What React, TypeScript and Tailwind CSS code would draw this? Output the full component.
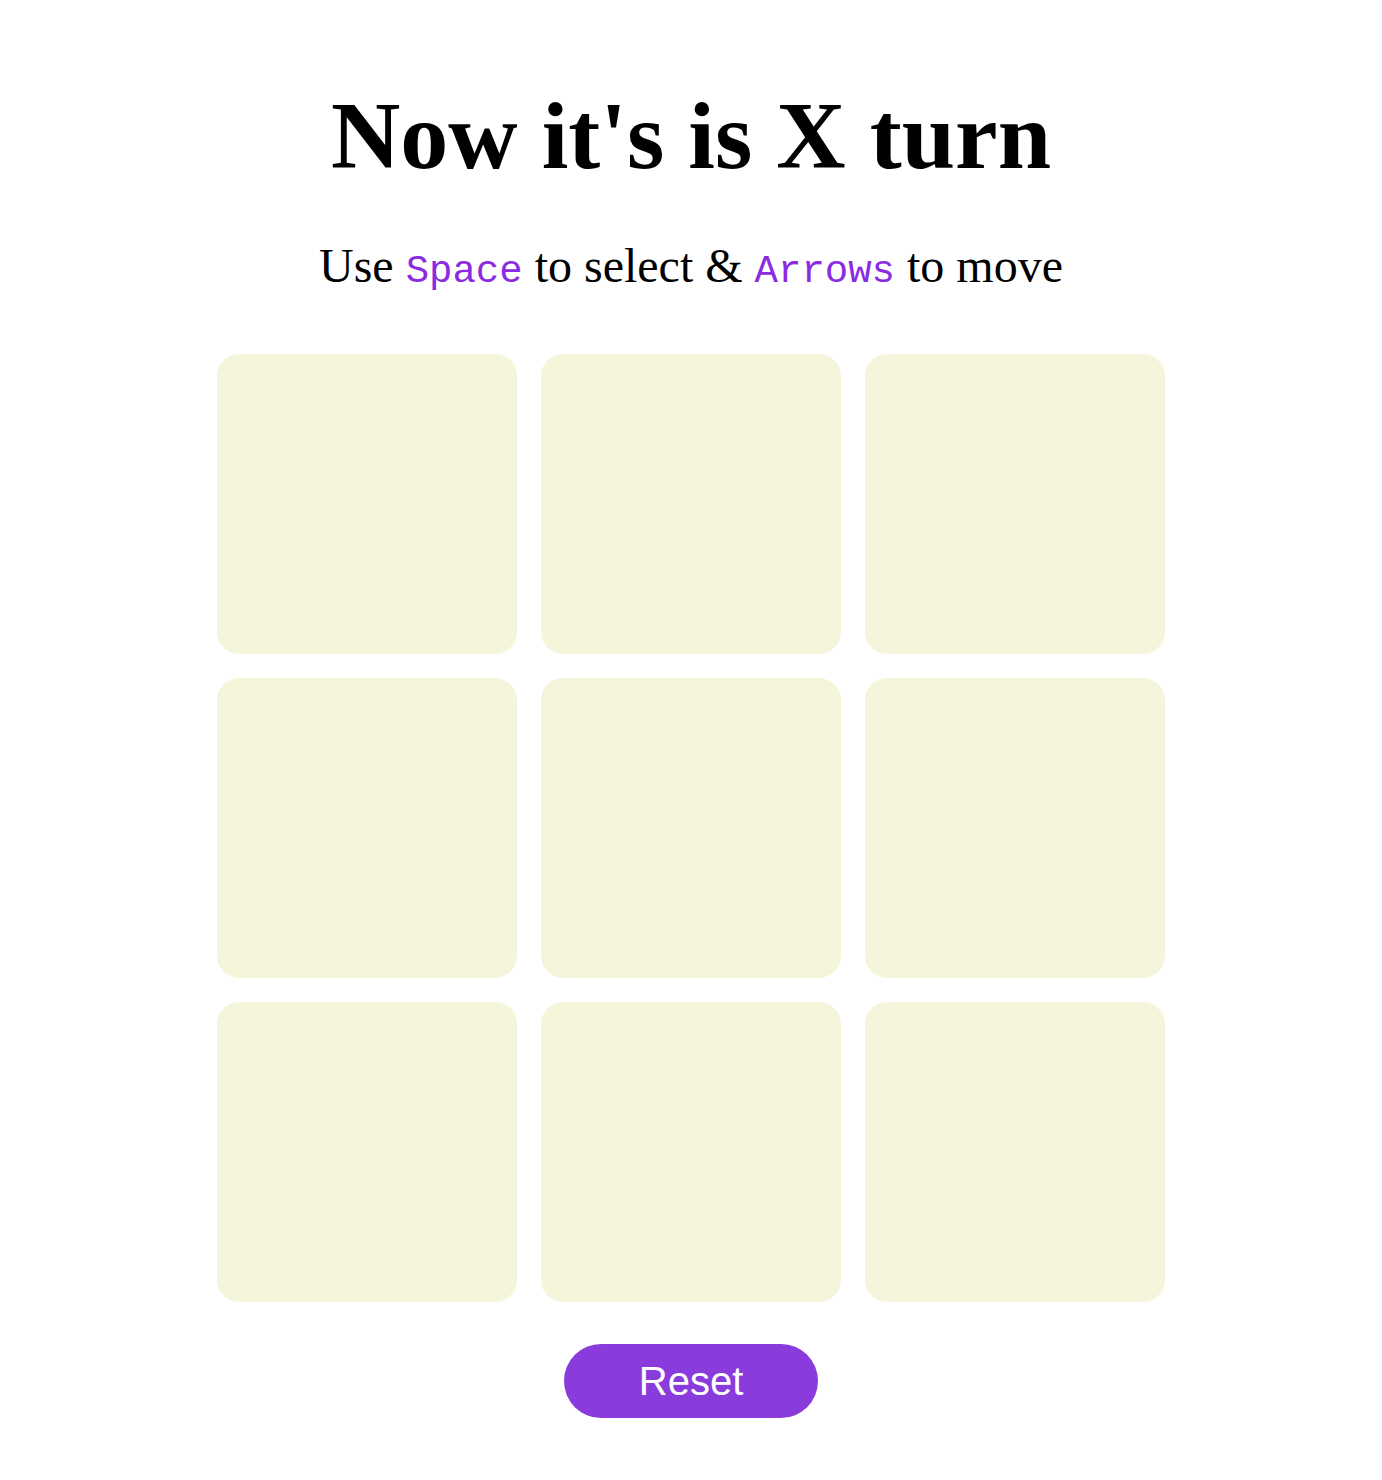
export default function App() {
  const cells = Array.from({ length: 9 }, (_, i) => i);
  return (
    <div className="flex min-h-[1480px] flex-col items-center bg-white pt-[86px] text-black">
      <h1 className="font-['Liberation_Serif','Times_New_Roman',serif] text-[96px] font-bold leading-[100px]">
        Now it's is X turn
      </h1>
      <p className="mt-[56px] font-['Liberation_Serif','Times_New_Roman',serif] text-[48px] leading-[48px]">
        Use{" "}
        <code className="font-['Liberation_Mono','Courier_New',monospace] text-[39px] leading-[39px] text-[#8a2be2]">
          Space
        </code>{" "}
        to select &amp;{" "}
        <code className="font-['Liberation_Mono','Courier_New',monospace] text-[39px] leading-[39px] text-[#8a2be2]">
          Arrows
        </code>{" "}
        to move
      </p>
      <div className="mt-[62px] grid grid-cols-[repeat(3,300px)] gap-[24px]">
        {cells.map((i) => (
          <div key={i} className="h-[300px] w-[300px] rounded-[22px] bg-[#f5f5dc]" />
        ))}
      </div>
      <button
        type="button"
        className="mt-[42px] h-[74px] w-[254px] rounded-full bg-[#8a3bdc] font-['Liberation_Sans',Arial,sans-serif] text-[40px] text-white"
      >
        Reset
      </button>
    </div>
  );
}
